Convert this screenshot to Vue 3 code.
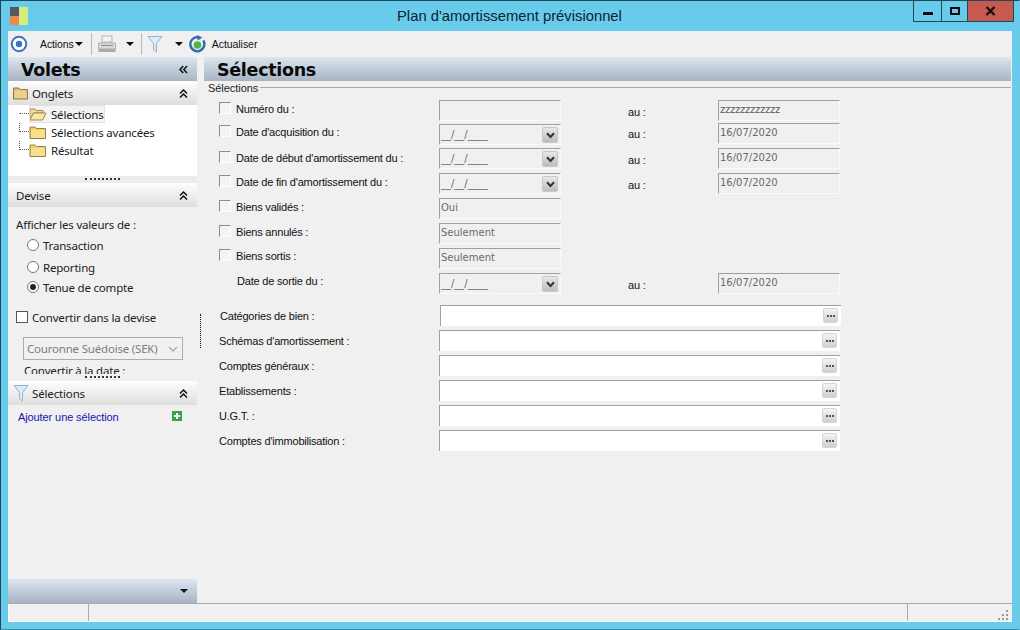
<script setup>
const tree = [
  { label: 'Sélections', open: true },
  { label: 'Sélections avancées' },
  { label: 'Résultat' },
]
const topRows = [
  { label: 'Numéro du :', kind: 'plain', h: 24, lt: 3, at: 6, to: 'zzzzzzzzzzzz', check: true },
  { label: "Date d'acquisition du :", kind: 'date', h: 24, lt: 2, at: 4, up: true, to: '16/07/2020', check: true },
  { label: "Date de début d'amortissement du :", kind: 'date', h: 25, lt: 4, at: 6, to: '16/07/2020', check: true },
  { label: "Date de fin d'amortissement du :", kind: 'date', h: 25, lt: 3, at: 6, to: '16/07/2020', check: true },
  { label: 'Biens validés :', kind: 'plain', value: 'Oui', h: 25, lt: 3, check: true },
  { label: 'Biens annulés :', kind: 'plain', value: 'Seulement', h: 25, lt: 3, check: true },
  { label: 'Biens sortis :', kind: 'plain', value: 'Seulement', h: 25, lt: 2, check: true },
  { label: 'Date de sortie du :', kind: 'date', h: 25, lt: 2, at: 6, to: '16/07/2020' },
]
const lookups = ['Catégories de bien :', "Schémas d'amortissement :", 'Comptes généraux :', 'Etablissements :', 'U.G.T. :', "Comptes d'immobilisation :"]
</script>

<template>
  <div class="win">
    <header class="title">
      <svg class="appicon" width="18" height="18" viewBox="0 0 16 16">
        <rect x="0" y="0" width="8" height="8" fill="#58585c" />
        <rect x="0" y="8" width="8" height="8" fill="#f08a4c" />
        <rect x="8" y="0" width="8" height="16" fill="#d3ee7a" />
      </svg>
      <span class="title-text">Plan d'amortissement prévisionnel</span>
      <div class="winbtns">
        <span class="wb wb-min"><i></i></span>
        <span class="wb wb-max"><i></i></span>
        <span class="wb wb-close">
          <svg width="11" height="10" viewBox="0 0 11 10"><path d="M1.5 1 L9.5 9 M9.5 1 L1.5 9" stroke="#111" stroke-width="2.4" /></svg>
        </span>
      </div>
    </header>

    <div class="client">
      <div class="toolbar">
        <svg class="t-target" width="18" height="18" viewBox="0 0 18 18">
          <circle cx="9" cy="9" r="7.2" fill="#fff" stroke="#3f6fc4" stroke-width="2" />
          <circle cx="9" cy="9" r="3.2" fill="#3f6fc4" />
        </svg>
        <span class="t-actions">Actions</span><span class="caret c1"></span>
        <span class="sep s1"></span>
        <svg class="t-print" width="20" height="20" viewBox="0 0 20 20">
          <rect x="5" y="2" width="10" height="6" fill="#f4f4f4" stroke="#b5b5b5" />
          <path d="M1.5 9 h17 v6 h-17 z" fill="#d9d9d9" stroke="#b0b0b0" />
          <rect x="1.5" y="15" width="17" height="3" fill="#a9a9a9" />
          <rect x="4" y="11" width="12" height="1" fill="#8f8f8f" />
        </svg>
        <span class="caret c2"></span>
        <span class="sep s2"></span>
        <svg class="t-funnel" width="16" height="18" viewBox="0 0 16 18">
          <path d="M1 1.5 H15 L9.5 8.5 V17 L6.5 14.5 V8.5 Z" fill="#dcebf7" stroke="#93b3cf" />
        </svg>
        <span class="caret c3"></span>
        <svg class="t-refresh" width="17" height="18" viewBox="0 0 17 18">
          <path d="M14.3 5.5 A7 7 0 1 1 9 2.2" fill="none" stroke="#2f6da8" stroke-width="2.4" />
          <path d="M8 0 L13.5 2.6 L8.6 5.6 Z" fill="#2f6da8" />
          <circle cx="8.5" cy="10" r="3.8" fill="#4fb548" />
        </svg>
        <span class="t-refresh-text">Actualiser</span>
      </div>

      <div class="main">
        <aside class="side">
          <div class="panehead">
            <span class="h-title">Volets</span>
            <svg class="dbl" width="9" height="9" viewBox="0 0 9 9"><path d="M4.2 1 L1 4.5 L4.2 8 M8 1 L4.8 4.5 L8 8" fill="none" stroke="#111" stroke-width="1.5" /></svg>
          </div>

          <div class="sechead">
            <svg class="folder closed" width="16" height="14" viewBox="0 0 16 14">
              <path d="M0.5 2 H6 L7.5 3.5 H14.5 V13 H0.5 Z" fill="#e0bd75" stroke="#8f7a4d" />
              <rect x="1.5" y="4.5" width="12" height="7.5" fill="#ecd08c" />
            </svg>
            <span class="sec-label">Onglets</span>
            <svg class="chev" width="9" height="9" viewBox="0 0 9 9"><path d="M1 4.5 L4.5 1 L8 4.5 M1 8.5 L4.5 5 L8 8.5" fill="none" stroke="#111" stroke-width="1.5" /></svg>
          </div>
          <div class="tree">
            <div v-for="(n, i) in tree" :key="n.label" class="node" :class="{ selected: n.open }">
              <span class="conn" :class="{ firstconn: i === 0 }"></span>
              <span class="node-box">
                <svg class="nfolder" width="18" height="13" viewBox="0 0 18 13">
                  <template v-if="n.open">
                    <path d="M1 1 H6 L7 2.5 H14 V5 H4.5 L1 12 Z" fill="#f3dc9b" stroke="#a5894e" />
                    <path d="M4.5 5 H17 L13.5 12 H1 Z" fill="#fbe7ad" stroke="#a5894e" />
                  </template>
                  <template v-else>
                    <path d="M1 1 H6 L7.5 2.5 H16.5 V12.5 H1 Z" fill="#f4cf64" stroke="#9a8145" />
                    <rect x="2" y="4" width="14" height="8" fill="#f8df8b" />
                  </template>
                </svg>
                <span class="node-text">{{ n.label }}</span>
              </span>
            </div>
          </div>
          <div class="splitter"><span></span></div>

          <div class="sechead">
            <span class="sec-label devise">Devise</span>
            <svg class="chev" width="9" height="9" viewBox="0 0 9 9"><path d="M1 4.5 L4.5 1 L8 4.5 M1 8.5 L4.5 5 L8 8.5" fill="none" stroke="#111" stroke-width="1.5" /></svg>
          </div>
          <div class="devise-body">
            <div class="afficher">Afficher les valeurs de :</div>
            <label class="radio r1"><span class="dot"></span>Transaction</label>
            <label class="radio r2"><span class="dot"></span>Reporting</label>
            <label class="radio r3"><span class="dot on"></span>Tenue de compte</label>
            <div class="convert"><span class="cb-flat"></span>Convertir dans la devise</div>
            <div class="combo">
              <span>Couronne Suédoise (SEK)</span>
              <svg width="10" height="6" viewBox="0 0 10 6"><path d="M1 1 L5 5 L9 1" fill="none" stroke="#a8a8a8" stroke-width="1.3" /></svg>
            </div>
            <div class="conv-date">Convertir à la date :</div>
          </div>
          <div class="splitter s2b"><span></span></div>

          <div class="sechead">
            <svg class="folder" width="16" height="18" viewBox="0 0 16 18">
              <path d="M1 1.5 H15 L9.5 8.5 V17 L6.5 14.5 V8.5 Z" fill="#dcebf7" stroke="#93b3cf" />
            </svg>
            <span class="sec-label">Sélections</span>
            <svg class="chev" width="9" height="9" viewBox="0 0 9 9"><path d="M1 4.5 L4.5 1 L8 4.5 M1 8.5 L4.5 5 L8 8.5" fill="none" stroke="#111" stroke-width="1.5" /></svg>
          </div>
          <div class="sel-body">
            <span class="link">Ajouter une sélection</span>
            <svg width="10" height="10" viewBox="0 0 10 10">
              <rect width="10" height="10" fill="#3f9f4b" />
              <path d="M5 2 V8 M2 5 H8" stroke="#fff" stroke-width="2" />
            </svg>
          </div>
          <div class="sidefoot"><span class="downcaret"></span></div>
        </aside>

        <div class="vsplit"></div>

        <section class="content">
          <div class="panehead right"><span class="h-title">Sélections</span></div>
          <div class="group-title"><span>Sélections</span><i></i></div>

          <div class="form">
            <div v-for="r in topRows" :key="r.label" class="row" :style="{ height: r.h + 'px' }">
              <div class="col-label" :style="{ paddingTop: r.lt + 'px' }">
                <span v-if="r.check" class="cb"></span>
                <span class="lbl" :class="{ nocheck: !r.check }">{{ r.label }}</span>
              </div>
              <div class="field">
                <span class="val" :class="{ mask: r.kind === 'date' }">{{ r.kind === 'date' ? '__/__/____' : r.value }}</span>
                <span v-if="r.kind === 'date'" class="drop">
                  <svg width="9" height="7" viewBox="0 0 9 7"><path d="M1 1.2 L4.5 5 L8 1.2" fill="none" stroke="#2b3440" stroke-width="2" /></svg>
                </span>
              </div>
              <template v-if="r.to">
                <span class="au" :style="{ paddingTop: r.at + 'px' }">au :</span>
                <div class="field to" :class="{ up: r.up }"><span class="val" :class="{ zz: r.to.startsWith('z') }">{{ r.to }}</span></div>
              </template>
            </div>
          </div>

          <div class="lookups">
            <div v-for="(l, i) in lookups" :key="l" class="lrow" :class="{ lfirst: i === 0 }">
              <span class="llabel">{{ l }}</span>
              <div class="lfield"><span class="ell"><i></i><i></i><i></i></span></div>
            </div>
          </div>
        </section>
      </div>

      <footer class="status">
        <span class="cell c-a"></span>
        <span class="cell c-b"></span>
        <span class="cell c-c">
          <svg width="11" height="11" viewBox="0 0 11 11" fill="#9a9a9a">
            <rect x="8" y="0" width="2" height="2" /><rect x="4" y="4" width="2" height="2" /><rect x="8" y="4" width="2" height="2" />
            <rect x="0" y="8" width="2" height="2" /><rect x="4" y="8" width="2" height="2" /><rect x="8" y="8" width="2" height="2" />
          </svg>
        </span>
      </footer>
    </div>
  </div>
</template>

<style>
html, body { margin: 0; padding: 0; background: #69cbeb; }
</style>

<style scoped>
.win {
  width: 1020px; height: 630px; box-sizing: border-box;
  background: #69cbeb;
  border: 1px solid #20485a;
  border-right-color: #69cbeb;
  border-bottom: 1px solid #3f8aa5;
  display: flex; flex-direction: column;
  font-family: "Liberation Sans", Arial, sans-serif;
  font-size: 11px; color: #111; overflow: hidden;
}
.title { height: 30px; flex: none; display: flex; position: relative; padding-left: 9px; box-sizing: border-box; }
.appicon { margin-top: 6px; }
.title-text {
  position: absolute; left: 396px; top: 7px;
  font-size: 14.8px; color: #0b2430; white-space: nowrap;
}
.winbtns {
  margin-left: auto; margin-right: 5px; display: flex; height: 21px;
  border: 1px solid #20485a; border-top: 0; box-sizing: border-box;
}
.wb { display: flex; align-items: center; justify-content: center; box-sizing: border-box; border-left: 1px solid #20485a; }
.wb:first-child { border-left: 0; }
.wb-min { width: 27px; }
.wb-min i { display: block; width: 10px; height: 3px; background: #0a0a0a; margin-top: 5px; }
.wb-max { width: 26px; }
.wb-max i { display: block; width: 6px; height: 4px; border: 2px solid #0a0a0a; margin-top: -1px; }
.wb-close { width: 46px; background: #c75a50; }

.client { margin: 0 7px 7px 7px; flex: 1; background: #f0f0f0; display: flex; flex-direction: column; min-height: 0; }

.toolbar { height: 26px; flex: none; display: flex; align-items: center; font-size: 10.5px; box-sizing: border-box; }
.t-target { margin-left: 2px; }
.t-actions { margin-left: 12px; letter-spacing: -0.1px; }
.caret { width: 0; height: 0; border: 4px solid transparent; border-top: 4px solid #111; border-bottom: 0; }
.c1 { margin-left: 1px; }
.sep { width: 1px; height: 22px; background: #b9b9b9; }
.s1 { margin-left: 8px; }
.t-print { margin-left: 5px; }
.c2 { margin-left: 9px; }
.s2 { margin-left: 7px; }
.t-funnel { margin-left: 5px; }
.c3 { margin-left: 12px; }
.t-refresh { margin-left: 6px; }
.t-refresh-text { margin-left: 6px; letter-spacing: -0.05px; }

.main { flex: 1; display: flex; min-height: 0; }
.side { width: 189px; flex: none; display: flex; flex-direction: column; }
.vsplit { width: 7px; flex: none; position: relative; }
.vsplit::after {
  content: ""; position: absolute; left: 3px; top: 257px; width: 0; height: 34px;
  border-left: 1px dotted #111;
}
.content { flex: 1; min-width: 0; display: flex; flex-direction: column; padding-right: 1px; }

.panehead {
  height: 24px; flex: none; box-sizing: border-box;
  background: linear-gradient(#dbe6f1, #a8b4c2);
  display: flex; align-items: center; justify-content: space-between;
  padding-left: 13px; padding-right: 9px;
}
.h-title { font-family: "DejaVu Sans", sans-serif; font-weight: 700; font-size: 17.5px; color: #0a0a0a; letter-spacing: -0.3px; margin-top: 1px; }
.dbl { flex: none; }
.right { padding-left: 13px; }

.sechead {
  height: 24px; flex: none; box-sizing: border-box;
  background: linear-gradient(#fdfdfd, #dedede);
  display: flex; align-items: center; padding-left: 5px;
}
.folder { flex: none; }
.sec-label { margin-left: 3px; font-family: "Noto Sans", sans-serif; font-size: 11.5px; letter-spacing: -0.15px; color: #222; }
.devise { margin-left: 3px; }
.chev { margin-left: auto; margin-right: 9px; flex: none; }

.tree { height: 71px; flex: none; background: #fff; box-sizing: border-box; }
.node { height: 18px; display: flex; align-items: center; padding-left: 11px; font-family: "Noto Sans", sans-serif; font-size: 11.5px; letter-spacing: -0.2px; color: #222; }
.conn { width: 10px; height: 9px; margin-bottom: 9px; flex: none; box-sizing: border-box; border-left: 1px dotted #555; border-bottom: 1px dotted #555; }
.firstconn { border-left-color: transparent; }
.node-box { display: flex; align-items: center; height: 18px; padding: 0 2px 0 0; box-sizing: border-box; white-space: nowrap; }
.selected .node-box { background: #f3f3f3; outline: 1px solid #e2e2e2; outline-offset: -1px; }
.node-text { margin-left: 4px; }
.nfolder { flex: none; }

.splitter { height: 7px; flex: none; background: #ececec; display: flex; justify-content: center; }
.splitter span { width: 35px; margin-top: 2px; height: 0; border-top: 2px dotted #333; }
.s2b { background: #f0f0f0; }

.devise-body { height: 167px; flex: none; overflow: hidden; font-family: "Noto Sans", sans-serif; font-size: 11.5px; letter-spacing: -0.2px; color: #222; display: flex; flex-direction: column; box-sizing: border-box; padding: 9px 0 0 8px; white-space: nowrap; }
.afficher { height: 17px; line-height: 17px; flex: none; }
.radio { display: flex; align-items: center; margin-left: 11px; height: 18px; flex: none; }
.r1 { margin-top: 3px; }
.r2 { margin-top: 4px; }
.r3 { margin-top: 2px; }
.dot { width: 12px; height: 12px; box-sizing: border-box; border: 1px solid #777; border-radius: 50%; background: #fff; margin-right: 4px; position: relative; flex: none; }
.dot.on::after { content: ""; position: absolute; left: 2px; top: 2px; width: 6px; height: 6px; border-radius: 50%; background: #222; }
.convert { display: flex; align-items: center; height: 18px; margin-top: 12px; flex: none; }
.cb-flat { width: 12px; height: 12px; box-sizing: border-box; border: 1px solid #555; background: #fff; margin-right: 4px; flex: none; }
.combo {
  margin: 11px 0 0 7px; width: 160px; height: 23px; box-sizing: border-box;
  border: 1px solid #adadad; background: #f1f1f1; color: #7c7c7c;
  display: flex; align-items: center; justify-content: space-between; padding: 0 4px 0 3px; flex: none;
}
.conv-date { margin: 2px 0 0 8px; height: 18px; line-height: 18px; flex: none; }

.sel-body { flex: 1; display: flex; align-items: flex-start; justify-content: space-between; padding: 6px 15px 0 10px; font-size: 11px; }
.sel-body svg { margin-top: 0; }
.link { color: #1414b4; letter-spacing: -0.1px; }
.sidefoot { height: 24px; flex: none; background: linear-gradient(#dbe6f1, #a8b4c2); display: flex; align-items: center; justify-content: flex-end; padding-right: 9px; }
.downcaret { width: 0; height: 0; border: 4px solid transparent; border-top: 4px solid #111; border-bottom: 0; }

.group-title { height: 19px; flex: none; display: flex; align-items: flex-start; padding: 1px 0 0 4px; font-size: 11px; letter-spacing: -0.05px; color: #222; box-sizing: border-box; }
.group-title span { line-height: 13px; }
.group-title i { flex: 1; height: 1px; background: #a8a8a8; margin: 5px 0 0 2px; }

.form { display: flex; flex-direction: column; }
.row { display: flex; align-items: flex-start; box-sizing: border-box; }
.col-label { width: 235px; padding-left: 15px; box-sizing: border-box; display: flex; align-items: flex-start; flex: none; }
.cb { width: 12px; height: 12px; flex: none; box-sizing: border-box; border: 1px solid #8d8d8d; border-right-color: #fff; border-bottom-color: #fff; background: #f4f4f4; margin-right: 5px; margin-top: -1px; }
.lbl { line-height: 13px; color: #111; white-space: nowrap; letter-spacing: -0.2px; }
.lbl.nocheck { margin-left: 18px; }
.field {
  width: 122px; height: 21px; flex: none; box-sizing: border-box; position: relative;
  border-top: 1px solid #a0a0a0; border-left: 1px solid #a0a0a0;
  border-right: 1px solid #fafafa; border-bottom: 1px solid #fafafa;
  background: #f0f0f0; display: flex; align-items: flex-start;
}
.val { font-family: "DejaVu Sans", sans-serif; font-size: 10px; color: #6a6a6a; padding: 2px 0 0 1px; line-height: 13px; }
.mask { padding-top: 3px; }
.zz { color: #5a5a5a; letter-spacing: -0.25px; }
.drop {
  position: absolute; right: 2px; top: 2px; width: 16px; height: 16px; box-sizing: border-box;
  background: linear-gradient(#e8e8e8, #bcbcbc); border: 1px solid #c8c8c8; border-radius: 2px;
  display: flex; align-items: center; justify-content: center;
}
.au { width: 157px; padding-left: 67px; box-sizing: border-box; flex: none; line-height: 13px; letter-spacing: -0.2px; }
.to { width: 122px; }
.up { margin-top: -1px; }

.lookups { margin-top: 7px; display: flex; flex-direction: column; }
.lrow { height: 25px; display: flex; align-items: flex-start; padding-left: 15px; }
.llabel { width: 220px; flex: none; line-height: 13px; padding-top: 5px; white-space: nowrap; letter-spacing: -0.2px; }
.lfirst { padding-left: 16px; }
.lfield {
  width: 401px; height: 21px; box-sizing: border-box; background: #fff; flex: none;
  border-top: 1px solid #a0a0a0; border-left: 1px solid #a0a0a0; position: relative;
}
.ell {
  position: absolute; right: 3px; top: 2px; width: 15px; height: 15px; box-sizing: border-box;
  background: linear-gradient(#f4f4f4, #cfcfcf); border: 1px solid #d5d5d5; border-radius: 2px;
  display: flex; align-items: center; justify-content: center; gap: 1px;
}
.ell i { width: 2px; height: 2px; background: #555; display: block; }

.status { height: 19px; flex: none; display: flex; border-top: 1px solid #a9a9a9; box-sizing: border-box; background: #f0f0f0; box-shadow: inset 0 -1px 0 #fff, inset 1px 0 0 #fff; }
.cell { display: block; box-sizing: border-box; height: 17px; }
.c-a { width: 80px; }
.c-b { flex: 1; border-left: 1px solid #a9a9a9; }
.c-c { width: 105px; border-left: 1px solid #a9a9a9; display: flex; justify-content: flex-end; align-items: flex-end; padding-right: 3px; }
</style>
